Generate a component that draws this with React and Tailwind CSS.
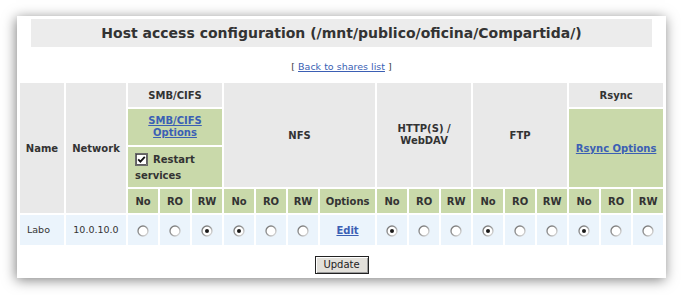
import React from "react";

const Radio = ({ checked }) => (
  <svg width="12" height="12" viewBox="0 0 12 12" className="inline-block align-middle">
    <defs>
      <linearGradient id="rg" x1="0" y1="0" x2="1" y2="1">
        <stop offset="0" stopColor="#6f6f6f" />
        <stop offset="0.5" stopColor="#9a9a9a" />
        <stop offset="1" stopColor="#e6e6e6" />
      </linearGradient>
    </defs>
    <circle cx="6" cy="6" r="5" fill="#ffffff" stroke="url(#rg)" strokeWidth="1.3" />
    {checked && <circle cx="6" cy="6" r="2" fill="#1a1a1a" />}
  </svg>
);

const CheckBox = () => (
  <svg width="13" height="13" viewBox="0 0 13 13" className="inline-block">
    <rect x="0.5" y="0.5" width="12" height="12" fill="#ffffff" stroke="#6a6a6a" />
    <rect x="1.5" y="1.5" width="10" height="10" fill="none" stroke="#3a3a3a" strokeWidth="0.8" />
    <path d="M3.2 6.3 L5.4 8.6 L9.8 3.8" fill="none" stroke="#111" strokeWidth="1.8" />
  </svg>
);

const gray = "bg-[#e9e9e9]";
const green = "bg-[#c9d9aa]";
const th = "text-[10px] font-bold text-[#333] text-center align-middle";
const link = "text-[#3b5fb4] underline";

const sub = ["No", "RO", "RW"];

export default function App() {
  const data = {
    smb: [false, false, true],
    nfs: [true, false, false],
    http: [true, false, false],
    ftp: [true, false, false],
    rsync: [true, false, false],
  };
  const radios = (arr, key) =>
    arr.map((c, i) => (
      <td key={key + i} className="bg-[#ebf4fc] text-center align-middle">
        <Radio checked={c} />
      </td>
    ));
  const subHeads = (key) =>
    sub.map((s) => (
      <td key={key + s} className={`${green} ${th}`}>
        {s}
      </td>
    ));

  return (
    <div
      className="w-[681px] h-[295px] bg-white pt-[16px] pl-[17px]"
      style={{ fontFamily: '"DejaVu Sans", Verdana, sans-serif' }}
    >
      <div className="w-[649px] h-[262px] bg-white shadow-[-1px_2px_12px_rgba(0,0,0,0.5)] pt-[3px] flex flex-col">
        <div className="mx-[14px] h-[28px] bg-[#ececec] flex items-center justify-center">
          <span className="text-[14px] font-bold text-[#333]">
            Host access configuration (/mnt/publico/oficina/Compartida/)
          </span>
        </div>
        <div className="h-[34px] pt-[6px] flex items-center justify-center text-[9.5px] text-[#444]">
          <span>
            [ <span className={link}>Back to shares list</span> ]
          </span>
        </div>
        <table className="ml-px w-[647px] table-fixed border-separate border-spacing-[2px]">
          <colgroup>
            <col className="w-[44px]" />
            <col className="w-[60px]" />
            <col className="w-[30px]" />
            <col className="w-[30px]" />
            <col className="w-[30px]" />
            <col className="w-[30px]" />
            <col className="w-[30px]" />
            <col className="w-[30px]" />
            <col className="w-[55px]" />
            <col className="w-[30px]" />
            <col className="w-[30px]" />
            <col className="w-[30px]" />
            <col className="w-[30px]" />
            <col className="w-[30px]" />
            <col className="w-[30px]" />
            <col className="w-[30px]" />
            <col className="w-[30px]" />
            <col className="w-[30px]" />
          </colgroup>
          <tbody>
            <tr className="h-[24px]">
              <td rowSpan={4} className={`${gray} ${th}`}>Name</td>
              <td rowSpan={4} className={`${gray} ${th}`}>Network</td>
              <td colSpan={3} className={`${gray} ${th}`}>SMB/CIFS</td>
              <td colSpan={4} rowSpan={3} className={`${gray} ${th}`}>NFS</td>
              <td colSpan={3} rowSpan={3} className={`${gray} ${th} leading-[12px]`}>
                HTTP(S) /<br />WebDAV
              </td>
              <td colSpan={3} rowSpan={3} className={`${gray} ${th}`}>FTP</td>
              <td colSpan={3} className={`${gray} ${th}`}>Rsync</td>
            </tr>
            <tr className="h-[36px]">
              <td colSpan={3} className={`${green} ${th} leading-[12px]`}>
                <span className={link}>SMB/CIFS</span>
                <br />
                <span className={link}>Options</span>
              </td>
              <td colSpan={3} rowSpan={2} className={`${green} ${th}`}>
                <span className={link}>Rsync Options</span>
              </td>
            </tr>
            <tr className="h-[40px]">
              <td colSpan={3} className={`${green} text-[10px] font-bold text-[#333] text-left align-middle pl-[7px] leading-[13px]`}>
                <span className="inline-flex items-center gap-[5px]">
                  <CheckBox />
                  <span>Restart</span>
                </span>
                <br />
                services
              </td>
            </tr>
            <tr className="h-[24px]">
              {subHeads("smb")}
              {subHeads("nfs")}
              <td className={`${green} ${th}`}>Options</td>
              {subHeads("http")}
              {subHeads("ftp")}
              {subHeads("rsync")}
            </tr>
            <tr className="h-[30px]">
              <td className="bg-[#ebf4fc] text-[9.5px] text-[#333] text-left pl-[7px] align-middle">Labo</td>
              <td className="bg-[#ebf4fc] text-[9.5px] text-[#333] text-center align-middle">10.0.10.0</td>
              {radios(data.smb, "s")}
              {radios(data.nfs, "n")}
              <td className="bg-[#ebf4fc] text-[10px] font-bold text-center align-middle">
                <span className={link}>Edit</span>
              </td>
              {radios(data.http, "h")}
              {radios(data.ftp, "f")}
              {radios(data.rsync, "r")}
            </tr>
          </tbody>
        </table>
        <div className="flex justify-center pt-[9px]">
          <button className="w-[54px] h-[18px] bg-[#e2e0da] border border-[#222] shadow-[inset_1px_1px_0_#ffffff,inset_-1px_-1px_0_#9a9a9a] text-[10px] text-[#222] leading-none">
            Update
          </button>
        </div>
      </div>
    </div>
  );
}
